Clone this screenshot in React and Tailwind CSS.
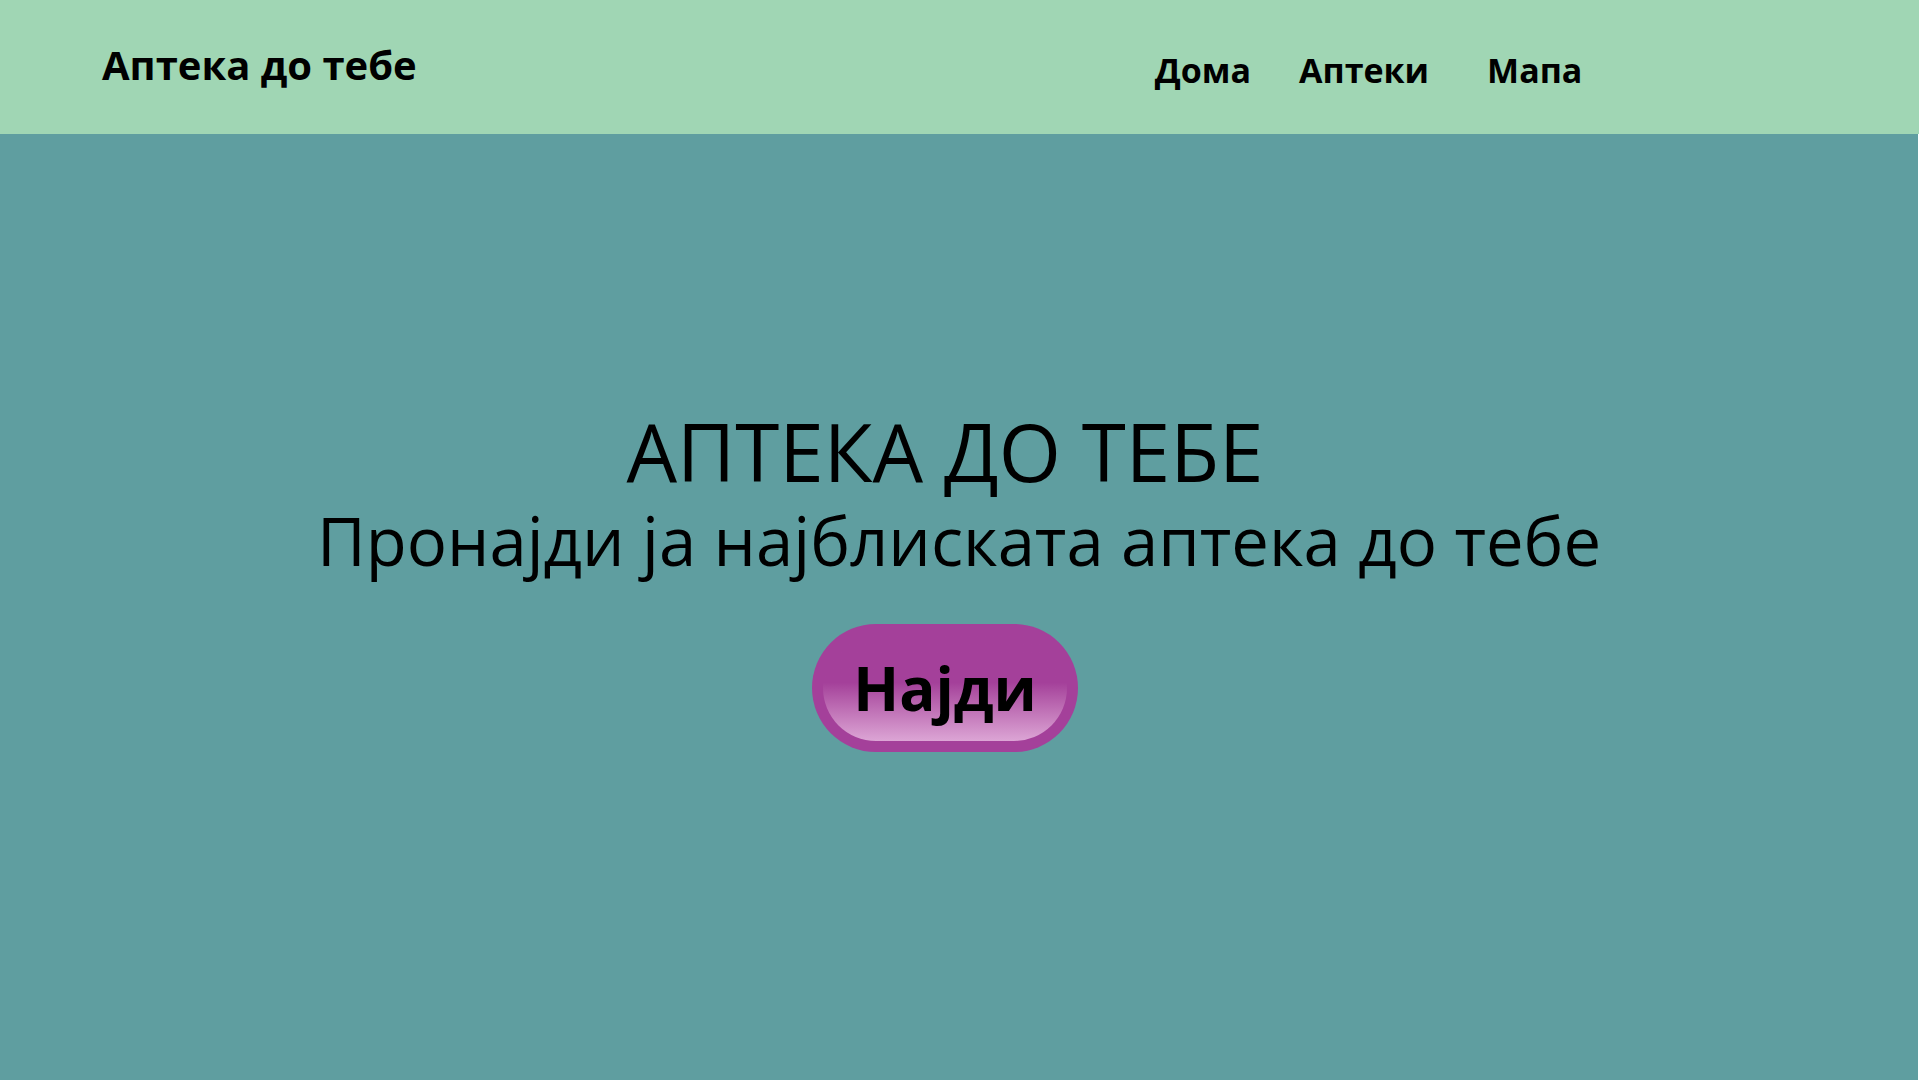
export default function App() {
  return (
    <div className="min-h-screen w-full bg-white font-['Open_Sans',sans-serif] text-black">
      <header className="flex h-[134px] w-[1919px] items-start bg-[#a0d6b4]">
        <h1 className="ml-[102px] mt-[35px] text-[40px] font-bold">Аптека до тебе</h1>
        <nav className="ml-[738px] mt-[45px] flex text-[34px] font-bold">
          <a className="cursor-pointer">Дома</a>
          <a className="ml-[48px] cursor-pointer">Аптеки</a>
          <a className="ml-[58px] cursor-pointer">Мапа</a>
        </nav>
      </header>

      <main className="flex h-[946px] w-[1918px] flex-col items-center bg-[#5f9ea0] pt-[277px]">
        <h2 className="mr-[28px] text-[80px] font-normal leading-[80px]">АПТЕКА ДО ТЕБЕ</h2>
        <p className="mt-[16px] text-[67px] leading-[67px]">Пронајди ја најблиската аптека до тебе</p>

        <button className="mr-[28px] mt-[50px] flex h-[128px] w-[266px] cursor-pointer items-center justify-center rounded-full bg-[#a4409a] p-[11px]">
          <span className="flex h-full w-full items-center justify-center rounded-full bg-gradient-to-b from-[#a4409a] from-45% to-[#dca5d5] text-[60px] font-bold">
            Најди
          </span>
        </button>
      </main>
    </div>
  );
}
